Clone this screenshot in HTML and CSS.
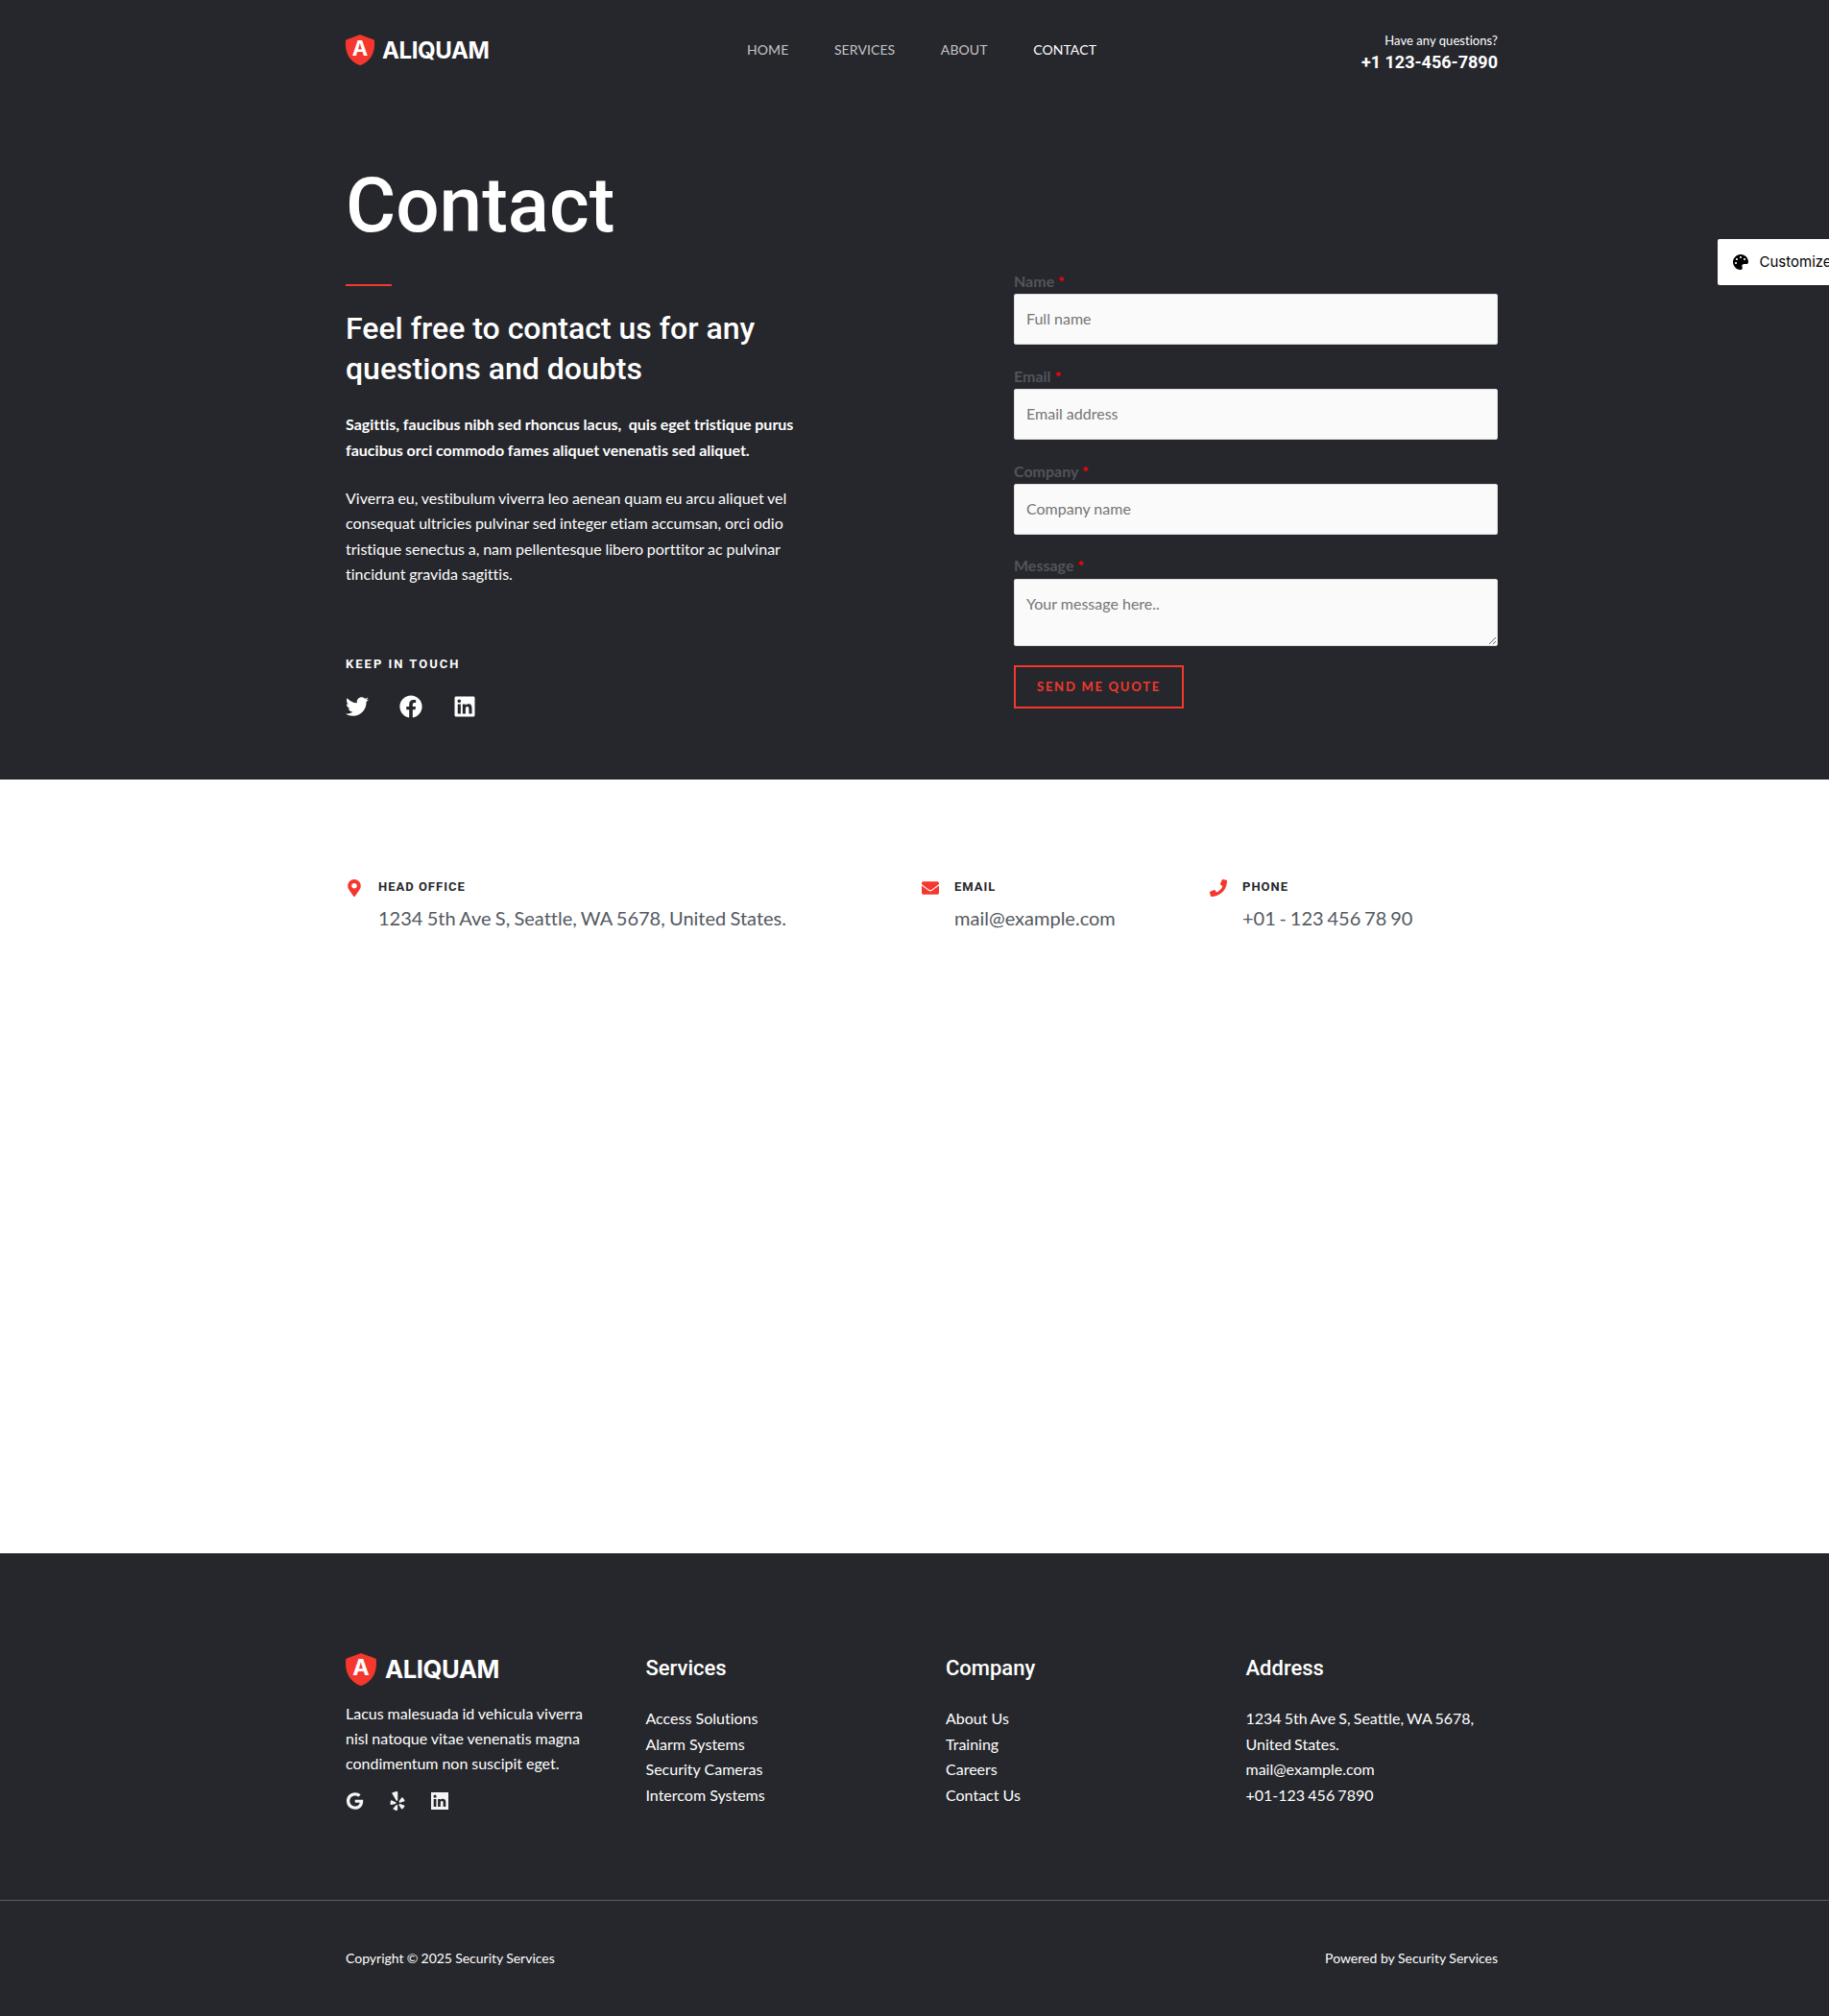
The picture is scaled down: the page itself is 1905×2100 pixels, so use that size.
FILE: index.html
```html
<!DOCTYPE html>
<html lang="en">
<head>
<meta charset="utf-8">
<title>Contact – Security Services</title>
<link rel="stylesheet" href="styles.css">
</head>
<body>
<div class="page">
<section class="hero">
  <header class="header wrap">
    <a class="logo" href="#">
      <svg class="logo-mark" viewBox="0 0 30 32"><path fill="#f5372d" d="M13.800 .4Q15-.2 16.200 .4L29 5.200Q30 5.600 30 6.800V11C30 21 24 28.500 16.500 31.600Q15 32.200 13.500 31.600C6 28.500 0 21 0 11V6.800Q0 5.600 1 5.200z"/><text x="15" y="21.800" text-anchor="middle" class="mark-letter">A</text></svg>
      <span class="logo-text">ALIQUAM</span>
    </a>
    <nav class="nav"><a href="#">HOME</a><a href="#">SERVICES</a><a href="#">ABOUT</a><a class="active" href="#">CONTACT</a></nav>
    <div class="call"><span>Have any questions?</span><strong>+1 123-456-7890</strong></div>
  </header>
  <div class="hero-body wrap">
    <div class="intro">
      <h1>Contact</h1>
      <div class="rule"></div>
      <h2>Feel free to contact us for any questions and doubts</h2>
      <p class="lead">Sagittis, faucibus nibh sed rhoncus lacus,&nbsp; quis eget tristique purus faucibus orci commodo fames aliquet venenatis sed aliquet.</p>
      <p class="copy">Viverra eu, vestibulum viverra leo aenean quam eu arcu aliquet vel consequat ultricies pulvinar sed integer etiam accumsan, orci odio tristique senectus a, nam pellentesque libero porttitor ac pulvinar tincidunt gravida sagittis.</p>
      <h6>KEEP IN TOUCH</h6>
      <div class="social">
        <svg width="24" height="24" viewBox="0 0 512 512"><path d="M459.370 151.716c.325 4.548.325 9.097.325 13.645 0 138.720-105.583 298.558-298.558 298.558-59.452 0-114.680-17.219-161.137-47.106 8.447.974 16.568 1.299 25.340 1.299 49.055 0 94.213-16.568 130.274-44.832-46.132-.975-84.792-31.188-98.112-72.772 6.498.974 12.995 1.624 19.818 1.624 9.421 0 18.843-1.300 27.614-3.573-48.081-9.747-84.143-51.980-84.143-102.985v-1.299c13.969 7.797 30.214 12.670 47.431 13.319-28.264-18.843-46.781-51.005-46.781-87.391 0-19.492 5.197-37.360 14.294-52.954 51.655 63.675 129.300 105.258 216.365 109.807-1.624-7.797-2.599-15.918-2.599-24.040 0-57.828 46.782-104.934 104.934-104.934 30.213 0 57.502 12.670 76.670 33.137 23.715-4.548 46.456-13.320 66.599-25.340-7.798 24.366-24.366 44.833-46.132 57.827 21.117-2.273 41.584-8.122 60.426-16.243-14.292 20.791-32.161 39.308-52.628 54.253z"/></svg>
        <svg width="24" height="24" viewBox="0 0 512 512"><path d="M504 256C504 119 393 8 256 8S8 119 8 256c0 123.780 90.690 226.380 209.250 245V327.690h-63V256h63v-54.640c0-62.150 37-96.480 93.670-96.480 27.140 0 55.520 4.840 55.520 4.840v61h-31.280c-30.800 0-40.410 19.120-40.410 38.730V256h68.780l-11 71.690h-57.780V501C413.310 482.380 504 379.780 504 256z"/></svg>
        <svg width="24" height="24" viewBox="-32 0 512 512"><path d="M416 32H31.900C14.300 32 0 46.500 0 64.300v383.400C0 465.500 14.300 480 31.900 480H416c17.600 0 32-14.500 32-32.300V64.300c0-17.800-14.400-32.300-32-32.300zM135.400 416H69V202.200h66.500V416zm-33.200-243c-21.300 0-38.500-17.300-38.500-38.500S80.900 96 102.200 96c21.200 0 38.500 17.300 38.500 38.500 0 21.300-17.200 38.500-38.500 38.500zm282.100 243h-66.400V312c0-24.800-.5-56.700-34.500-56.700-34.600 0-39.900 27-39.900 54.900V416h-66.400V202.200h63.700v29.200h.9c8.900-16.800 30.600-34.500 62.900-34.500 67.200 0 79.700 44.300 79.700 101.900V416z"/></svg>
      </div>
    </div>
    <form class="form">
      <label>Name <i>*</i></label><input type="text" placeholder="Full name">
      <label>Email <i>*</i></label><input type="text" placeholder="Email address">
      <label>Company <i>*</i></label><input class="company" type="text" placeholder="Company name">
      <label>Message <i>*</i></label><textarea placeholder="Your message here.."></textarea>
      <button type="button">SEND ME QUOTE</button>
    </form>
  </div>
</section>
<section class="details wrap">
  <div class="detail">
    <svg width="18" height="18" viewBox="-64 0 512 512"><path d="M172.268 501.670C26.970 291.031 0 269.413 0 192 0 85.961 85.961 0 192 0s192 85.961 192 192c0 77.413-26.970 99.031-172.268 309.670-9.535 13.774-29.930 13.773-39.464 0zM192 272c44.183 0 80-35.817 80-80s-35.817-80-80-80-80 35.817-80 80 35.817 80 80 80z"/></svg>
    <div><h5>HEAD OFFICE</h5><p>1234 5th Ave S, Seattle, WA 5678, United States.</p></div>
  </div>
  <div class="detail">
    <svg width="18" height="18" viewBox="0 0 512 512"><path d="M502.300 190.800c3.900-3.100 9.700-.2 9.700 4.700V400c0 26.500-21.500 48-48 48H48c-26.500 0-48-21.500-48-48V195.600c0-5 5.700-7.800 9.700-4.700 22.400 17.400 52.100 39.500 154.100 113.600 21.100 15.400 56.700 47.800 92.200 47.600 35.700.3 72-32.800 92.300-47.600 102-74.100 131.600-96.300 154-113.700zM256 320c23.200.4 56.600-29.200 73.400-41.400 132.700-96.300 142.800-104.700 173.400-128.700 5.800-4.500 9.200-11.500 9.200-18.900v-19c0-26.500-21.500-48-48-48H48c-26.500 0-48 21.500-48 48v19c0 7.400 3.400 14.300 9.200 18.900 30.600 23.900 40.700 32.400 173.400 128.700 16.800 12.200 50.200 41.800 73.400 41.400z"/></svg>
    <div><h5>EMAIL</h5><p>mail@example.com</p></div>
  </div>
  <div class="detail">
    <svg width="18" height="18" viewBox="0 0 512 512"><path d="M493.400 24.600l-104-24c-11.300-2.600-22.900 3.300-27.500 13.900l-48 112c-4.200 9.800-1.400 21.300 6.900 28l60.600 49.600c-36 76.700-98.900 140.500-177.200 177.200l-49.600-60.600c-6.800-8.300-18.200-11.100-28-6.900l-112 48C3.900 366.500-2 378.100.6 389.400l24 104C27.100 504.200 36.700 512 48 512c256.100 0 464-207.500 464-464 0-11.200-7.700-20.900-18.600-23.400z"/></svg>
    <div><h5>PHONE</h5><p class="phone">+01 - 123 456 78 90</p></div>
  </div>
</section>
<footer class="footer">
  <div class="footer-cols wrap">
    <div>
      <a class="logo logo-lg" href="#">
        <svg class="logo-mark" viewBox="0 0 30 32"><path fill="#f5372d" d="M13.800 .4Q15-.2 16.200 .4L29 5.200Q30 5.600 30 6.800V11C30 21 24 28.500 16.500 31.600Q15 32.200 13.500 31.600C6 28.500 0 21 0 11V6.800Q0 5.600 1 5.200z"/><text x="15" y="21.800" text-anchor="middle" class="mark-letter">A</text></svg>
        <span class="logo-text">ALIQUAM</span>
      </a>
      <p>Lacus malesuada id vehicula viverra nisl natoque vitae venenatis magna condimentum non suscipit eget.</p>
      <div class="footer-social">
        <svg width="20" height="20" viewBox="-26 -26 564 564"><path d="M488 261.800C488 403.300 391.100 504 248 504 110.800 504 0 393.200 0 256S110.800 8 248 8c66.800 0 123 24.500 166.300 64.900l-67.500 64.900C258.500 52.600 94.300 116.600 94.300 256c0 86.500 69.100 156.600 153.700 156.600 98.200 0 135-70.400 140.800-106.900H248v-85.300h236.100c2.300 12.700 3.900 24.900 3.900 41.400z"/></svg>
        <svg width="20" height="20" viewBox="-64 0 512 512"><path d="M42.900 240.320l99.620 48.610c19.200 9.400 16.200 37.510-4.500 42.710L30.500 358.450a22.790 22.790 0 0 1-28.210-19.600 197.160 197.160 0 0 1 9-85.320 22.800 22.800 0 0 1 31.610-13.210zm44 239.250a199.450 199.450 0 0 0 79.420 32.110A22.780 22.780 0 0 0 192.940 490l3.900-110.820c.7-21.300-25.500-31.910-39.810-16.100l-74.210 82.400a22.820 22.820 0 0 0 4.090 34.090zm145.340-109.920l58.810 94a22.930 22.930 0 0 0 34 5.500 198.360 198.360 0 0 0 52.710-67.610A23 23 0 0 0 364.170 370l-105.420-34.260c-20.310-6.500-37.810 15.800-26.510 33.910zm148.330-132.230a197.440 197.440 0 0 0-50.410-69.310 22.850 22.850 0 0 0-34 4.400l-62 91.920c-11.900 17.700 4.700 40.610 25.200 34.710L366 268.630a23 23 0 0 0 14.610-31.210zM62.110 30.180a22.860 22.860 0 0 0-9.900 32l104.120 180.440c11.700 20.200 42.610 11.900 42.610-11.400V22.880a22.670 22.670 0 0 0-24.500-22.800 320.370 320.370 0 0 0-112.330 30.100z"/></svg>
        <svg width="20" height="20" viewBox="-1 -1 20 20"><path fill-rule="evenodd" d="M0 0H18V18H0zM2.700 6.900V15H5.400V6.900zM4.050 2.600A1.550 1.550 0 1 0 4.050 5.700 1.550 1.550 0 1 0 4.050 2.600zM7.100 6.900V15H9.800V10.800C9.800 8.500 12.600 8.500 12.600 10.600V15H15.300V10.100C15.300 6.300 11 6 9.700 8V6.900z"/></svg>
      </div>
    </div>
    <div><h3>Services</h3><ul><li>Access Solutions</li><li>Alarm Systems</li><li>Security Cameras</li><li>Intercom Systems</li></ul></div>
    <div><h3>Company</h3><ul><li>About Us</li><li>Training</li><li>Careers</li><li>Contact Us</li></ul></div>
    <div><h3>Address</h3><ul class="address"><li>1234 5th Ave S, Seattle, WA 5678, United States.</li><li>mail@example.com</li><li>+01-123 456 7890</li></ul></div>
  </div>
  <div class="legal"><div class="legal-row wrap"><span>Copyright © 2025 Security Services</span><span class="powered">Powered by Security Services</span></div></div>
</footer>
<aside class="customize">
  <svg width="16" height="16" viewBox="0 0 512 512"><path d="M204.300 5C104.900 24.400 24.800 104.300 5.200 203.400c-37 187 131.700 326.400 258.800 306.700 41.200-6.400 61.400-54.600 42.500-91.700-23.100-45.400 9.900-98.400 60.900-98.400h79.700c35.800 0 64.800-29.600 64.900-65.300C511.500 97.100 368.100-26.900 204.300 5zM96 320c-17.700 0-32-14.300-32-32s14.300-32 32-32 32 14.300 32 32-14.300 32-32 32zm32-128c-17.700 0-32-14.300-32-32s14.300-32 32-32 32 14.300 32 32-14.300 32-32 32zm128-64c-17.700 0-32-14.300-32-32s14.300-32 32-32 32 14.300 32 32-14.300 32-32 32zm128 64c-17.700 0-32-14.300-32-32s14.300-32 32-32 32 14.300 32 32-14.300 32-32 32z"/></svg>
  <span>Customize</span>
</aside>
</div>
</body>
</html>
```
FILE: styles.css
```css
* { box-sizing: border-box; }
body { margin: 0; font: 16px/26.4px Lato, sans-serif; font-variant-ligatures: none; color: #fff; background: #fff; overflow: hidden; }
h1, h2, h3, h5, h6, p, ul { margin: 0; padding: 0; }
h1, h2, h3, h5, h6 { font-family: Roboto, sans-serif; font-weight: 500; }
a { color: inherit; text-decoration: none; }
ul { list-style: none; }
svg { display: block; fill: currentColor; flex: none; }
.page { position: relative; overflow: hidden; }
.wrap { width: 1200px; margin-left: 360px; }

.hero { background: #26272c; height: 812px; }
.header { height: 104px; display: grid; grid-template-columns: 418px 1fr auto; align-items: center; }
.logo { display: flex; align-items: center; gap: 8px; height: 32px; }
.logo-mark { width: 30px; height: 32px; }
.mark-letter { font: 700 22px Inter, sans-serif; fill: #fff; }
.logo-text { font: 700 24px/32px Inter, sans-serif; letter-spacing: -0.4px; padding-top: 1px; }
.nav { display: flex; gap: 47.5px; font-size: 14px; letter-spacing: 0.1px; color: #c4c4c6; }
.nav .active { color: #fff; }
.call { display: flex; flex-direction: column; text-align: right; font-size: 13px; line-height: 22px; padding-top: 2px; letter-spacing: 0.05px; }
.call strong { font: 700 18px/23px Roboto, sans-serif; letter-spacing: 0; }

.hero-body { display: flex; justify-content: space-between; }
.intro { width: 480px; padding-top: 62px; }
h1 { font-size: 80px; line-height: 96px; }
.rule { width: 48px; height: 2px; background: #f5372d; margin: 34px 0 23px; }
h2 { font-size: 32px; line-height: 42px; width: 450px; }
.lead { font-weight: 700; line-height: 27px; margin: 23px 0 24px; word-spacing: -0.1px; }
.copy { width: 470px; word-spacing: -0.3px; }
h6 { font-size: 13px; line-height: 20px; font-weight: 700; letter-spacing: 2px; margin-top: 70px; }
.social { display: flex; gap: 32px; margin-top: 22px; }

.form { width: 504px; padding-top: 176px; display: flex; flex-direction: column; align-items: stretch; }
label { font-weight: 700; color: #50545d; line-height: 26px; }
label i { font-style: normal; color: #f00; }
input, textarea { font: 16px/20px Lato, sans-serif; color: #666; background: #fafafa; border: 1px solid #ddd; border-radius: 2px; padding: 0 12px 2px; height: 53px; margin: 0 0 20px; }
.company { margin-bottom: 19px; }
textarea { height: 70px; padding-top: 15px; margin-top: 1px; }
::placeholder { color: #757575; opacity: 1; }
button { align-self: flex-start; width: 177px; height: 45px; background: none; border: 2px solid #f5372d; color: #f5372d; font: 700 13px/16px Lato, sans-serif; letter-spacing: 1.75px; padding: 0 0 2px; }

.details { height: 806px; padding-top: 104px; display: grid; grid-template-columns: 600px 300px 300px; align-items: start; }
.detail { display: flex; gap: 16px; }
.detail svg { color: #f5372d; }
h5 { font-size: 13px; line-height: 16px; font-weight: 700; letter-spacing: 1px; color: #26272c; }
.detail p { font-size: 20px; line-height: 32px; color: #54595f; margin-top: 8px; word-spacing: -0.85px; }
.detail .phone { word-spacing: -1.3px; }

.footer { background: #26272c; height: 482px; }
.footer-cols { height: 361px; padding-top: 104px; display: grid; grid-template-columns: repeat(4, 262.5px); gap: 50px; }
.logo-lg { height: 34px; gap: 9px; }
.logo-lg .logo-mark { width: 32px; height: 34px; }
.logo-lg .logo-text { font-size: 25.6px; padding-top: 0; }
.footer-cols p { margin-top: 16px; line-height: 26px; word-spacing: -0.2px; }
.footer-social { display: flex; align-items: center; gap: 24px; margin-top: 16px; color: #f4f4f4; }
h3 { font-size: 22px; line-height: 32px; }
.footer-cols ul { margin-top: 23.4px; }
.address { word-spacing: -0.9px; }
.legal { border-top: 1px solid #5a5c62; }
.legal-row { display: flex; justify-content: space-between; padding-top: 48px; font-size: 14px; line-height: 24px; word-spacing: -0.4px; }
.powered { word-spacing: 0; }

.customize { position: absolute; left: 1788.5px; top: 249px; width: 131px; height: 48px; background: #fff; color: #000; border-radius: 2px; display: flex; align-items: center; gap: 12px; padding-left: 16px; font: 400 15px/20px Inter, sans-serif; }
```
